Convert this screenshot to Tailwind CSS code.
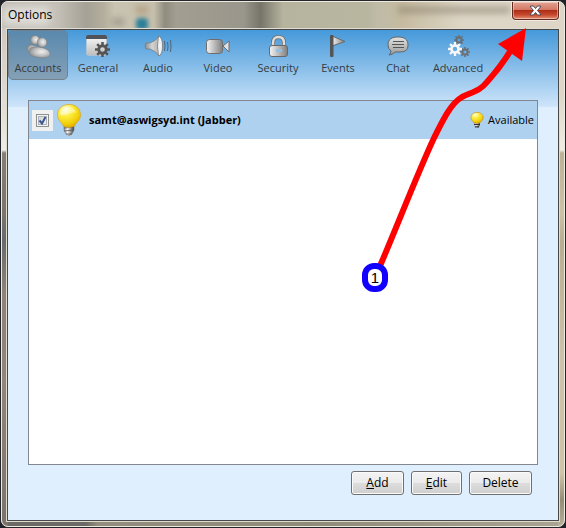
<!DOCTYPE html>
<html lang="en">
<head>
<meta charset="utf-8">
<title>Options</title>
<script src="https://cdn.jsdelivr.net/npm/@tailwindcss/browser@4"></script>
</head>
<body class="bg-[#20222a] font-['Open_Sans','Noto_Sans',sans-serif] text-xs text-black">
<svg class="absolute h-0 w-0" aria-hidden="true">
  <defs>
    <linearGradient id="silver" x1="0" y1="0" x2="1" y2="0"><stop offset="0" stop-color="#f4f4f4"/><stop offset="1" stop-color="#808080"/></linearGradient>
    <linearGradient id="cone" x1="0" y1="0" x2="1" y2="0"><stop offset="0" stop-color="#8c8c8c"/><stop offset=".5" stop-color="#d4d4d4"/><stop offset="1" stop-color="#b0b0b0"/></linearGradient>
    <linearGradient id="silverDown" x1="0" y1="0" x2="0" y2="1"><stop offset="0" stop-color="#e4e4e4"/><stop offset="1" stop-color="#999"/></linearGradient>
    <linearGradient id="page" x1="0" y1="0" x2="0" y2="1"><stop offset="0" stop-color="#fafafa"/><stop offset="1" stop-color="#bdbdbd"/></linearGradient>
    <radialGradient id="person" cx=".6" cy=".45" r=".65"><stop offset="0" stop-color="#f0f0f0"/><stop offset=".5" stop-color="#c4c4c4"/><stop offset="1" stop-color="#858585"/></radialGradient>
    <radialGradient id="glow" cx=".35" cy=".22" r=".85"><stop offset="0" stop-color="#fffde0"/><stop offset=".35" stop-color="#fcee42"/><stop offset=".75" stop-color="#f1ce07"/><stop offset="1" stop-color="#d9a000"/></radialGradient>
    <linearGradient id="metal"><stop offset="0" stop-color="#8c8c8c"/><stop offset=".35" stop-color="#f5f5f5"/><stop offset="1" stop-color="#3c3c3c"/></linearGradient>
    <symbol id="bulb" viewBox="0 0 24 32">
      <path d="M7 21h10v5l-2 4q-3 3-6 0l-2-4z" fill="url(#metal)" stroke="#777" stroke-width=".6"/>
      <path d="M7 24l10-1M7 27l10-1M9 30h6" stroke="#555" stroke-width=".8"/>
      <path d="M12 .5C5 .5.5 5 .5 11c0 5 4 7 6 11q5 3 11 0c2-4 6-6 6-11C23.500 5 19 .5 12 .5z" fill="url(#glow)" stroke="#dca61c" stroke-width=".7"/>
      <path d="M3 11C3 5 8 2 13 3c4 1 6 3 6 6-6-2-10 3-16 2z" fill="#fff" opacity=".4"/>
    </symbol>
    <symbol id="bulbSmall" viewBox="0 0 14 16">
      <path d="M4 10h6v3l-1 2q-2 1-4 0l-1-2z" fill="url(#metal)"/>
      <path d="M4 12.500h6M5 14.800h4" stroke="#2e3038" stroke-width="1.200"/>
      <path d="M7 .4C3.500.4.900 2.600.9 5.500c0 2.500 2 3.500 3 5.200q3 1.200 6.200 0c1-1.700 3-2.700 3-5.200C13.100 2.600 10.500.4 7 .4z" fill="url(#glow)" stroke="#c9951c" stroke-width=".7"/>
    </symbol>
    <symbol id="gear" viewBox="-12 -12 24 24">
      <circle r="6" fill="none" stroke="currentColor" stroke-width="4.500"/>
      <path d="M0-12V-7M0 7v5M-12 0h5M7 0h5M-8.500-8.500l3.500 3.500M5 5l3.500 3.500M-8.500 8.500l3.500-3.500M5-5l3.500-3.500" stroke="currentColor" stroke-width="4"/>
    </symbol>
  </defs>
</svg>

<div class="relative flex min-h-screen flex-col rounded-lg border border-[#25262a] bg-[#8f887c]">
  <div class="flex grow flex-col rounded-[7px] border border-[#eeeae0] bg-[linear-gradient(#c8c2bb,#e6e0da_120px,#efebe6_148px,#857d76_151px,#7b746e_210px,#666a6e_238px,#8d8379_290px,#928579_380px,#7a736c),linear-gradient(#ddd6c6,#ddd6c6_90px,#f0ece2_148px,#bdb394_151px,#cdc2a5_210px,#b9ae90_240px,#cdc3a8_360px,#cfc4a6_90%,#958d74_95%,#b5b099),linear-gradient(to_right,#6b6a66_15%,#928d7c_17%,#8f8b79_55%,#aaa592)] bg-[position:left_top,right_top,left_bottom] bg-[size:6px_100%,6px_100%,100%_30px] bg-no-repeat">
    <header class="relative flex h-[26px] shrink-0 items-center overflow-hidden rounded-t-md bg-[linear-gradient(to_right,#bdb9b1_0%,#c3bfb6_10%,#a5a196_15%,#b3ad9c_18%,#c9c3b1_20%,#c6c0ac_27%,#8f8c80_29%,#a29e91_31%,#99968b_43%,#77756a_46%,#b6b49f_50%,#b8b69f_65%,#bfbba8_67%,#c6bba0_71%,#ded7c7_82%,#ddd6c6_100%)] pl-1.5">
      <div class="absolute top-4 left-[134px] h-3 w-3 rounded bg-[#2b7f98] blur-[2px]"></div>
      <div class="absolute top-1 left-[134px] h-2 w-3 bg-[#9c784f]/40 blur-[3px]"></div>
      <div class="absolute top-4 left-[110px] h-2 w-3 bg-[#807c70]/50 blur-[3px]"></div>
      <div class="absolute top-1 left-[396px] h-2 w-28 bg-[#857c6a]/50 blur-[3px]"></div>
      <div class="absolute top-1 left-0 h-5 w-12 bg-white/50 blur-[5px]"></div>
      <h1 class="relative">Options</h1>
      <button aria-label="Close" class="absolute top-0 right-[5px] flex h-[18px] w-[47px] items-center justify-center rounded-b-[4px] border border-t-0 border-[#632a22] bg-[linear-gradient(#e4a392_0%,#d37966_45%,#ae2d17_50%,#c6472d_75%,#e39172_100%)] shadow-[inset_0_0_0_1px_#ffffff66,0_0_0_1px_#ffffff88]">
        <svg class="h-[11px] w-[13px]" viewBox="0 0 13 11"><path d="M1.500 1h3l2 2.500L8.500 1h3v1L8.500 5.500 11.500 9v1h-3l-2-2.500-2 2.500h-3V9l3-3.500-3-3.500z" fill="#fff" stroke="#504a55"/></svg>
      </button>
    </header>

    <div class="mx-1 mb-1 flex grow flex-col border border-[#e0dccf]">
      <main class="flex grow flex-col border border-[#46484a] bg-[#dfeffd] bg-[linear-gradient(#4599da,#cfe5fa)] bg-[length:100%_77px] bg-no-repeat">
        <nav class="flex h-[50px] shrink-0 text-[11px] text-[#363b40] [text-shadow:0_1px_0_#ffffff80]">
          <button class="flex w-15 flex-col items-center gap-0.5 rounded-[5px] border border-[#72828f] bg-[#6c7880]/50 pt-1">
            <svg class="h-6 w-7 shrink-0" viewBox="0 0 28 24" stroke="#777" stroke-width=".4" fill="url(#person)"><path d="M3 13q0-4 5-3l8 3-4 7q-9-2-9-7z"/><circle cx="11" cy="5" r="4.500"/><path d="M5 17q0-6 8-5c6 0 13 3 13 7 0 5-9 4-14 3q-6-1-7-5z"/><circle cx="18" cy="7.500" r="4.800"/></svg>
            Accounts
          </button>
          <button class="flex w-15 flex-col items-center gap-0.5 pt-[5px]">
            <svg class="h-6 w-7 shrink-0 text-[#555]" viewBox="0 0 28 24"><rect x="2.500" y=".5" width="20" height="20" rx="2" fill="url(#page)" stroke="#c4cdd4" stroke-width=".5"/><path d="M2 4V2q0-2 2-2h17q2 0 2 2v2z" fill="#50535a"/><use href="#gear" x="11" y="7" width="15" height="15"/></svg>
            General
          </button>
          <button class="flex w-15 flex-col items-center gap-0.5 pt-[5px]">
            <svg class="h-6 w-7 shrink-0" viewBox="0 0 28 24"><path d="M2 8h4q6-2 9-7v20q-3-5-9-7H2q-2-3 0-6z" fill="url(#cone)" stroke="#777" stroke-width=".7"/><path d="M14.500 1q4 1 4 10t-4 10q-2-10 0-20z" fill="#f1f1f1" stroke="#777" stroke-width=".8"/><path d="M20.500 6q1 5 0 10M23.500 7q1 4 0 9M26.500 5q1 6 0 12" fill="none" stroke="#4e657b" stroke-width="1"/></svg>
            Audio
          </button>
          <button class="flex w-15 flex-col items-center gap-0.5 pt-[5px]">
            <svg class="h-6 w-7 shrink-0" viewBox="0 0 28 24" stroke="#6d6d6d"><path d="M19 11l6-5v11z" fill="#e2e2e2"/><rect x="2.500" y="4.500" width="16" height="14" rx="3" fill="url(#silver)"/></svg>
            Video
          </button>
          <button class="flex w-15 flex-col items-center gap-0.5 pt-[5px]">
            <svg class="h-6 w-7 shrink-0" viewBox="0 0 28 24"><path d="M9 12V8q0-6 5.500-6T20 8v4" fill="none" stroke="#707070" stroke-width="4"/><path d="M9 12V8q0-6 5.500-6T20 8v4" fill="none" stroke="#ddd" stroke-width="2.400"/><rect x="5.500" y="10.500" width="18" height="11" rx="2.500" fill="url(#silver)" stroke="#686868"/><rect x="12" y="14" width="6" height="3" rx="1" fill="#93bfe2"/></svg>
            Security
          </button>
          <button class="flex w-15 flex-col items-center gap-0.5 pt-[5px]">
            <svg class="h-6 w-7 shrink-0" viewBox="0 0 28 24"><path d="M8 1l13 5.500L8 11z" fill="url(#silver)" stroke="#686868"/><rect x="6" width="3.500" height="22" rx="1" fill="#555"/></svg>
            Events
          </button>
          <button class="flex w-15 flex-col items-center gap-0.5 pt-[5px]">
            <svg class="h-6 w-7 shrink-0" viewBox="0 0 28 24"><path d="M14 2c6 0 10 2 10 8s-4 7-10 7h-3q-3 3-6 3 2-2 2-4-3-2-3-6c0-6 4-8 10-8z" fill="url(#silverDown)" stroke="#656565"/><path d="M9 6.500h11M8 9.500h12M9 12.500h11" stroke="#555"/></svg>
            Chat
          </button>
          <button class="flex w-15 flex-col items-center gap-0.5 pt-[5px]">
            <svg class="h-6 w-7 shrink-0" viewBox="0 0 28 24"><g class="text-[#6b6f73]"><use href="#gear" x="10" width="10" height="10"/><use href="#gear" x="16" y="12" width="10" height="10"/></g><g class="text-[#f7f7f7]"><use href="#gear" x="4" y="7" width="14" height="14"/></g></svg>
            Advanced
          </button>
        </nav>

        <section class="mx-5 mt-5 flex grow flex-col border border-[#828790] bg-white">
          <div class="flex h-[38px] shrink-0 items-center bg-[#add1ef] px-[3px]">
            <label class="relative flex h-[21px] w-[21px] items-center justify-center bg-[#f0f0f0]">
              <input type="checkbox" checked aria-label="Enable samt@aswigsyd.int (Jabber)" class="h-[13px] w-[13px] appearance-none border border-[#8e8f8f] bg-[linear-gradient(135deg,#cbcfd5,#f6f6f6)] shadow-[inset_0_0_0_1px_#f4f4f4,inset_0_0_0_2px_#aeb3b9]">
              <svg class="pointer-events-none absolute top-1 left-1 h-[13px] w-[13px]" viewBox="0 0 13 13"><path d="M3.500 6.500L6 9.500 9.500 3" fill="none" stroke="#3d5490" stroke-width="2"/></svg>
            </label>
            <svg class="ml-1 h-8 w-6 shrink-0"><use href="#bulb"/></svg>
            <span class="ml-2 grow text-[11px] font-bold">samt@aswigsyd.int (Jabber)</span>
            <svg class="mr-1 h-4 w-3.5 shrink-0"><use href="#bulbSmall"/></svg>
            <span class="text-[11px]">Available</span>
          </div>
        </section>

        <footer class="mt-1.5 mr-[26px] mb-[25px] flex justify-end gap-[7px]">
          <button class="h-6 w-[53px] rounded-[3px] border border-[#707070] bg-[linear-gradient(#f3f3f3,#ebebeb_48%,#dddddd_50%,#cfcfcf)] shadow-[inset_0_0_0_1px_#fafafa]"><u>A</u>dd</button>
          <button class="h-6 w-[51px] rounded-[3px] border border-[#707070] bg-[linear-gradient(#f3f3f3,#ebebeb_48%,#dddddd_50%,#cfcfcf)] shadow-[inset_0_0_0_1px_#fafafa]"><u>E</u>dit</button>
          <button class="h-6 w-[63px] rounded-[3px] border border-[#707070] bg-[linear-gradient(#f3f3f3,#ebebeb_48%,#dddddd_50%,#cfcfcf)] shadow-[inset_0_0_0_1px_#fafafa]">Delete</button>
        </footer>
      </main>
    </div>
  </div>

  <svg class="pointer-events-none absolute -inset-px h-[calc(100%+2px)] w-[calc(100%+2px)]" viewBox="0 0 566 528">
    <path d="M380 266C398 224 418 172 434 138C442 122 450 104 462 97C472 92 480 91 487 82C495 73 503 63 511 50" fill="none" stroke="#f00" stroke-width="6"/>
    <path d="M526 28L498 44L522 61z" fill="#f00"/>
    <rect x="365" y="266" width="20" height="23" rx="9" fill="#fff" stroke="#10f" stroke-width="6"/>
    <text x="375" y="283" text-anchor="middle" font-family="Liberation Sans, sans-serif" font-size="15" fill="#000">1</text>
  </svg>
</div>
</body>
</html>
